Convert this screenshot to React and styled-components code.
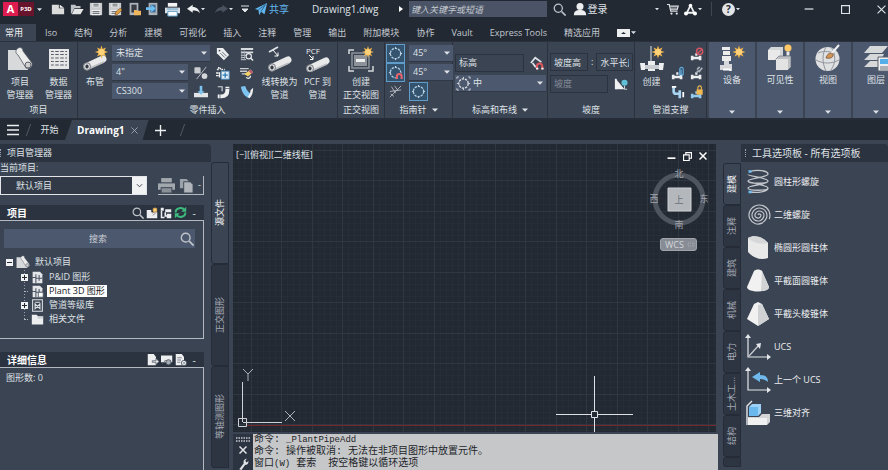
import React, { useState } from 'react';
import styled, { createGlobalStyle } from 'styled-components';

const GlobalStyle = createGlobalStyle`
  * {
    box-sizing: border-box;
  }
  body {
    margin: 0;
    background: #3b4453;
    color: #dfe2e6;
    font: 9px/12px "Open Sans", "Noto Sans CJK SC", sans-serif;
  }
  button, input, select {
    margin: 0;
    padding: 0;
    border: 0;
    border-radius: 0;
    background: transparent;
    color: inherit;
    font: inherit;
  }
  ul {
    margin: 0;
    padding: 0;
    list-style: none;
  }
  svg {
    display: block;
    flex: none;
  }
`;

/* ---------- icons ---------- */

const Icon = ({ size = 14, width, box = '0 0 16 16', children }) => (
  <svg width={width || size} height={size} viewBox={box} fill="none" stroke="none" aria-hidden="true">
    {children}
  </svg>
);

const Caret = ({ size = 6 }) => (
  <Icon size={size} box="0 0 6 6"><path d="M0 1.5h6L3 4.8z" fill="#dfe2e6" /></Icon>
);

const Spark = ({ x, y, r = 5 }) => (
  <g transform={`translate(${x} ${y}) scale(${r / 5})`}>
    <path d="M0-5.5 1-2.4 3.8-3.8 2.4-1 5.5 0 2.4 1 3.8 3.8 1 2.4 0 5.5-1 2.4-3.8 3.8-2.4 1-5.5 0-2.4-1-3.8-3.8-1-2.4z" fill="#f0b64c" />
    <circle r="2.6" fill="#ffd27a" />
  </g>
);

const NewIcon = () => (
  <Icon><path d="M1 3h8v4h6v7H1z" fill="#dcdcdc" /><path d="M10 3l5 3.5h-5z" fill="#f4f4f4" /></Icon>
);
const OpenIcon = () => (
  <Icon><path d="M1 3h5l1 1.500h5V7H5l-3 6H1z" fill="#bfc2c6" /><path d="M5 8h10.500l-3.500 6H2z" fill="#e6e6e6" /></Icon>
);
const SaveIcon = ({ pen }) => (
  <Icon>
    <path d="M1 1h14v14H1z" fill="#c9cbce" />
    <path d="M4 1h8v5H4zM3 9h10v6H3z" fill="#f1f1f1" />
    <path d="M5 2.500h6M5 4.500h6M4 11h8M4 13h8" stroke="#4a505a" />
    {pen && <path d="M8 15l1-4 5-4 2 2-4.500 5z" fill="#e0a040" stroke="#70431f" strokeWidth=".6" />}
  </Icon>
);
const DeviceIcon = ({ blue }) => (
  <Icon>
    <path d="M3 1h10v14H3z" fill="#aeb3b9" />
    <path d="M5 3h6v9H5z" fill={blue ? '#3f6f9a' : '#383d45'} />
    {blue
      ? <path d="M0 7h6V4l5 4.500L6 13v-3H0z" fill="#6fc0f2" transform="translate(0 -1)" />
      : <path d="M8 9h3l1 1h4v5H8z" fill="#efb55c" />}
  </Icon>
);
const PrinterIcon = ({ gray, size = 15 }) => (
  <Icon size={size}>
    <path d="M3 1h10v4H3z" fill={gray ? '#a2a7ae' : '#f4f4f4'} />
    <path d="M0 6h16v6H0z" fill={gray ? '#a2a7ae' : '#d9e0e6'} />
    <path d="M3 10h10v5H3z" fill={gray ? '#8b9098' : '#fff'} stroke={gray ? '#4b535f' : '#5a9bc8'} />
    {!gray && <path d="M2 7.500h12" stroke="#5a9bc8" />}
  </Icon>
);
const ArrowIcon = ({ redo }) => (
  <Icon size={13}>
    <g transform={redo ? 'matrix(-1 0 0 1 16 0)' : undefined}>
      <path d="M0 7l7-5v3c5 0 8 3 9 8-2-3-5-4-9-3.500V12z" fill={redo ? '#4a525f' : '#eceef0'} />
    </g>
  </Icon>
);
const ShareIcon = () => (
  <Icon><path d="M1 8L15 1l-3 13-4-3-2 4-1-6z" fill="#62b6ee" /><path d="M5 9l8-6-5 8" stroke="#235a86" /></Icon>
);
const SearchIcon = ({ size = 13, color = '#c0c4ca' }) => (
  <Icon size={size}><circle cx="6.500" cy="6.500" r="5" stroke={color} strokeWidth="1.600" /><path d="M10.500 10.500l5 5" stroke={color} strokeWidth="2" /></Icon>
);
const UserIcon = () => (
  <Icon><circle cx="8" cy="5" r="4" fill="#eceef0" /><path d="M1 15c0-5 3-6 7-6s7 1 7 6z" fill="#eceef0" /></Icon>
);
const CartIcon = () => (
  <Icon size={12}>
    <path d="M0 2h3l2 9h9M4 4h11l-1.500 5H5" stroke="#dfe2e6" strokeWidth="1.600" />
    <path d="M5 5h9M5 7h8" stroke="#dfe2e6" /><circle cx="6" cy="14" r="1.500" fill="#dfe2e6" /><circle cx="13" cy="14" r="1.500" fill="#dfe2e6" />
  </Icon>
);
const AppsIcon = () => (
  <Icon size={13}><path d="M8 3L3 13M8 3l5 10M4 12h8" stroke="#eceef0" strokeWidth="2.200" /><circle cx="8" cy="3" r="2.200" fill="#fff" /><circle cx="2.500" cy="13" r="2.500" fill="#fff" /><circle cx="13.500" cy="13" r="2.500" fill="#fff" /></Icon>
);

const ProjectIcon = ({ size = 26 }) => (
  <Icon size={size} box="0 0 26 26">
    <path d="M1 4h10l4 7 6 7v6H1z" fill="#d8d9da" />
    <path d="M10 3c3-3 6-1 6 2l9 12c1 4-3 7-6 5L11 9c-2-1-3-4-1-6z" fill="#ececec" stroke="#50565f" strokeWidth=".8" />
    <circle cx="21" cy="19" r="3" fill="#d0d0d0" stroke="#5c6169" />
  </Icon>
);
const DataIcon = () => (
  <Icon size={26} box="0 0 26 26">
    <path d="M3 3h20v20H3z" fill="#e6e6e6" />
    <path d="M5 8.500h16M5 12h16M5 15.500h16M5 19h16M5 5.500h16" stroke="#565d68" strokeWidth="1.200" />
    <path d="M8.500 4v18M13.500 4v18M18.500 4v18" stroke="#e6e6e6" strokeWidth="1.500" />
  </Icon>
);
const Pipe = ({ y = 0 }) => (
  <g transform={`translate(0 ${y})`}>
    <path d="M5 18.500L21 11" stroke="#e9e9e9" strokeWidth="7" strokeLinecap="round" />
    <path d="M6 21l16-7" stroke="#b9bbbd" strokeWidth="1.500" />
    <ellipse cx="5" cy="18.500" rx="3.500" ry="3.800" fill="#dcdcdc" stroke="#747980" />
    <ellipse cx="5" cy="18.500" rx="1.600" ry="1.900" fill="#333a45" />
  </g>
);
const PipeIcon = () => (
  <Icon size={26} box="0 0 26 26"><Pipe y={2} /><Spark x={19.500} y={6} r={6} /></Icon>
);
const LineToPipeIcon = () => (
  <Icon size={26} box="0 0 26 26">
    <path d="M2 6l9-5" stroke="#dfe2e6" strokeWidth="1.800" /><path d="M6 4l5 6M11 6.500V10H7.500" stroke="#fff" /><Pipe y={3} />
  </Icon>
);
const PcfIcon = () => (
  <Icon size={26} box="0 0 26 26">
    <text x="1" y="8" fontSize="8" fill="#eceef0">PCF</text><path d="M4 9l4 4M8 10v3.500H5" stroke="#fff" /><Pipe y={4} />
  </Icon>
);
const OrthoIcon = () => (
  <Icon size={26} box="0 0 26 26">
    <path d="M1 8V4h5M1 20v5h5M20 25h5v-5" stroke="#d5d8dc" strokeWidth="1.500" />
    <path d="M4 7h17v15H4z" stroke="#8b919a" strokeWidth="1.500" />
    <path d="M6 9h13v11H6z" fill="#8d9299" /><path d="M8 13h9v3H8z" fill="#eceef0" />
    <Spark x={20} y={6} r={5.500} />
  </Icon>
);
const SupportIcon = () => (
  <Icon size={26} box="0 0 26 26">
    <path d="M12 0v16" stroke="#aab0b8" strokeWidth="1.500" />
    <path d="M1 17h5v7H2zM20 17h5l-1 7h-4zM9 15h7v10H9z" fill="#eceef0" /><path d="M6 19h14v4H6z" fill="#c9ccd0" />
    <Spark x={19} y={6} r={6} />
  </Icon>
);
const EquipmentIcon = () => (
  <Icon size={28} box="0 0 28 28">
    <path d="M4 3h8v3H4zM5 7h7v4H5zM4 12h9v5H4z" fill="#ececec" />
    <path d="M6 17h5v4H6zM2 21h4v5H2zM11 20h3v7h-3zM6 21h5v4H6z" fill="#d5d7da" /><path d="M5 25.500h8" stroke="#fff" strokeWidth="2" />
    <Spark x={21} y={8} r={6} />
  </Icon>
);
const VisibilityIcon = () => (
  <Icon size={28} box="0 0 28 28">
    <path d="M2 6l3-3h12v10l-3 3H2z" fill="#d4d5d7" /><path d="M2 6h12v10H2z" fill="#e9e9e9" />
    <path d="M10 15l3-3h12v11l-3 3H10z" fill="#bdbfc2" stroke="#5c6575" strokeWidth=".6" /><path d="M10 15h12v11H10z" fill="#e3e3e3" />
    <circle cx="22" cy="4" r="3.500" fill="#ffc766" /><path d="M20.500 7.500h3v4h-3z" fill="#e6e6e6" />
  </Icon>
);
const ViewIcon = () => (
  <Icon size={28} box="0 0 28 28">
    <circle cx="13.500" cy="15" r="12" fill="#dfe0e1" />
    <path d="M2 16c7 4 16 4 23 0M12 3c-4 7-4 16 0 24M17 3c5 7 5 16 0 23M4 9c5-2 10-2 16 0" stroke="#8f949c" />
    <path d="M25 1l-8 9" stroke="#f0f0f0" strokeWidth="2" /><path d="M12 14c1-4 4-6 7-4 1 3-2 5-7 4z" fill="#d09358" stroke="#6d4a2b" strokeWidth=".7" />
  </Icon>
);
const LayerIcon = () => (
  <Icon size={28} box="0 0 28 28">
    <path d="M8 2h18l-6 7H2zM8 10h14l-3 6H2zM8 17h10v6H2z" fill="#d5d7d9" />
    <path d="M16 13h12v14H16z" fill="#eceef0" stroke="#59606c" /><path d="M18 15h8v5h-8z" fill="#55aee8" /><path d="M18 23h8M18 25h8" stroke="#6c727b" />
  </Icon>
);

const TagIcon = () => (
  <Icon><path d="M1 1h7l7 8-6 6-8-8z" fill="#eceef0" /><path d="M5 7l5 5M7 5.500l5 5" stroke="#596270" /><circle cx="4" cy="4" r="1" fill="#3b4453" /></Icon>
);
const ListIcon = () => (
  <Icon><path d="M1 1h14v2.500H1zM1 5h14v2H1z" fill="#d7dade" /><path d="M1 9.500h6M1 12h5M1 14.500h6" stroke="#d7dade" /><path d="M2 4v10M5 4v10" stroke="#a4aab2" /><circle cx="10" cy="10.500" r="3" stroke="#eceef0" strokeWidth="1.300" /><path d="M12 12.500l3 3" stroke="#eceef0" strokeWidth="1.500" /></Icon>
);
const PercentIcon = () => (
  <Icon><path d="M1 2h6v6H1zM14 1L3 15" fill="#c9ccd0" stroke="#c9ccd0" /><circle cx="12" cy="11.500" r="3.300" fill="#d5d7da" /></Icon>
);
const InsertIcon = () => (
  <Icon><path d="M1 4h2v-2h2v2h5" stroke="#eceef0" strokeWidth="1.500" strokeDasharray="2 1" /><path d="M0 8h3M0 11h3M4 7v6" stroke="#eceef0" strokeWidth="1.500" /><path d="M6 6h9v9H6z" fill="#e5edf4" stroke="#559bd0" /><path d="M10.500 7.500v6M7.500 10.500h6" stroke="#2c7cb8" strokeWidth="1.500" /></Icon>
);
const EditIcon = () => (
  <Icon><path d="M0 3h10M0 6h8M2 9h5" stroke="#c9ccd0" strokeWidth="1.500" /><path d="M5 9l7-5 3 3-6 5z" fill="#f1d066" /><path d="M12 4l3 3-2 2-3-3z" fill="#b65a7b" /><path d="M7 13c2 2 5 1 5-2" stroke="#eceef0" strokeWidth="1.500" /></Icon>
);
const TeeIcon = () => (
  <Icon><path d="M0 9h16v5H0z" fill="#e2e5e8" /><path d="M8 1v7" stroke="#7cc3f0" strokeWidth="3" /><path d="M4 7h8l-4 4z" fill="#7cc3f0" /></Icon>
);
const ElbowIcon = () => (
  <Icon><path d="M13 2v4c0 4-2 7-7 7H2" stroke="#f1f1f1" strokeWidth="4.500" /><path d="M2 2h5v5" stroke="#d7dade" strokeWidth="1.300" /><path d="M10 4h6M4.500 10v6" stroke="#606774" /></Icon>
);
const BendIcon = () => (
  <Icon><path d="M1 2c1 6 4 11 9 13l3-5C9 8 7 5 6 1z" fill="#7cc3f0" /><path d="M11 15c3-3 4-7 4-12l-3 3c0 3-1 5-3 7z" fill="#eceef0" /></Icon>
);
const CompassIcon = ({ magnet, corners }) => (
  <Icon size={15}>
    <circle cx="8" cy="8" r={corners ? 5 : 5.500} stroke={corners ? '#dfe2e6' : '#b4d0e4'} strokeWidth="1.400" strokeDasharray="2.500 1" />
    <path d="M8 1v2M8 13v2M1 8h2M13 8h2" stroke="#cfd4da" />
    {corners && <path d="M1 3V1h2M13 1h2v2M1 13v2h2M13 15h2v-2" stroke="#cfd4da" />}
    {magnet && <><path d="M8 8h8v8H8z" fill="#33536f" /><path d="M9.500 15v-3a2.500 2.500 0 015 0v3" stroke="#e9646b" strokeWidth="2.200" /></>}
  </Icon>
);
const RoutingIcon = () => (
  <Icon size={13}><path d="M1 15L15 1M1 8l14-2M3 2l5 8M7 1l4 6M2 11l4 3" stroke="#b9bec5" strokeWidth="1.100" /></Icon>
);
const MagnetIcon = () => (
  <Icon><path d="M1 8l5-6 7 5M3 8l3 4h3" stroke="#dfe2e6" strokeWidth="2" /><path d="M8 15v-3.500a3 3 0 016 0V15" stroke="#dc565d" strokeWidth="2.400" /><path d="M7 14.500h2.500M13 14.500h2.500" stroke="#fff" strokeWidth="2" /></Icon>
);
const SlopeIcon = () => (
  <Icon><path d="M2 2l10 12H2z" fill="#f0f0f0" /><path d="M2 2v12" stroke="#f0f0f0" strokeWidth="2" /><circle cx="12" cy="6.500" r="3.500" fill="#5fc0d6" /><path d="M12 10v4h3" stroke="#dfe2e6" /></Icon>
);
const ClampIcon = ({ kind }) => (
  <Icon>
    <path d="M1 10h3v5H1zM10 10h3v5h-3zM4 11h6v3H4zM6 7h2.500v3H6z" fill={kind === 'lock' ? '#93c9ec' : '#eceef0'} />
    {kind === 'off' && <g stroke="#d05664" strokeWidth="1.700"><circle cx="11" cy="5" r="3.500" /><path d="M8.500 7.500l5-5" /></g>}
    {kind === 'clip' && <path d="M10 11V3.500a2 2 0 014 0V9a1.200 1.200 0 01-2.400 0V4" stroke="#5faee2" strokeWidth="1.300" />}
    {kind === 'link' && <path d="M7 8l3-3M10 7l4-5M8 4l3-3" stroke="#a9afb8" strokeWidth="2" />}
    {kind === 'lock' && <><path d="M7.500 5h7v6h-7z" fill="#f2b950" /><path d="M9 5V3a2 2 0 014 0v2" stroke="#f2b950" strokeWidth="1.300" /></>}
  </Icon>
);
const BranchIcon = () => (
  <Icon><path d="M3 2v5c0 2 1 3 3 3h4M10 6v9" stroke="#a8d6f2" strokeWidth="3" /><path d="M1 2h5M14 8v6" stroke="#fff" strokeWidth="2" /></Icon>
);

const FolderStarIcon = () => (
  <Icon size={12}><path d="M1 4h6v3h8v8H1z" fill="#eceef0" /><path d="M8 8l4-2M9 11l4-3" stroke="#7b6d62" /><Spark x={12} y={4} r={4} /></Icon>
);
const TreeViewIcon = () => (
  <Icon size={12}><path d="M1 1h4v4H1zM7 3h8v4H7zM9 9h6v6H9z" fill="#eceef0" /><path d="M2 5v9h4M7 7v5h3" stroke="#eceef0" strokeWidth="2" /></Icon>
);
const RefreshIcon = () => (
  <Icon size={13}><path d="M2 8c0-6 8-7 11-3M14 8c0 6-8 7-11 3" stroke="#3dbb7d" strokeWidth="2.500" /><path d="M15 1v6H9zM1 15V9h6z" fill="#3dbb7d" /></Icon>
);
const CopyIcon = () => (
  <Icon size={15}><path d="M1 1h7l2 2v8H1z" fill="#9ca2aa" /><path d="M5 4h7l3 3v9H5z" fill="#b1b5bb" stroke="#3b4453" /></Icon>
);
const SheetIcon = ({ kind }) => (
  <Icon size={12}>
    <path d={kind === 'preview' ? 'M0 2h15v9H0z' : 'M1 0h8l3 4v11H1z'} fill="#eceef0" />
    {kind === 'export' && <path d="M7 9h5V6l4 4-4 4v-3H7z" fill="#eceef0" stroke="#4d5562" />}
    {kind === 'preview' && <><path d="M2 13l4-5 3 3" stroke="#59606c" /><circle cx="10" cy="11" r="3.500" fill="#a5abb3" stroke="#3b4453" /></>}
    {kind === 'settings' && <><path d="M3 5h6M3 8h5M3 11h4" stroke="#59606c" /><circle cx="12" cy="12" r="3.500" fill="#eceef0" stroke="#3b4453" /><circle cx="12" cy="12" r="1" fill="#3b4453" /></>}
  </Icon>
);
const DrawingIcon = ({ kind }) => (
  <Icon size={13}>
    {kind === 'book'
      ? <path d="M2 1h12v14H2zM5 12V6l6 6V6zM5 4h6" stroke="#dfe2e6" strokeWidth="1.300" />
      : <><path d="M2 1h9l3 3v11H2z" fill="#e3e5e8" /><path d="M1 8h5V4M6 15V9h8M10 5v7" stroke="#4c5563" strokeWidth="1.300" /></>}
    {kind === 'plant' && <path d="M9 9h6v6H9z" fill="#fff" stroke="#4c5563" />}
  </Icon>
);
const FolderIcon = () => (
  <Icon size={13}><path d="M1 2h6l1.500 2H15v10H1z" fill="#eceef0" /><path d="M8 6h7" stroke="#aeb3ba" /></Icon>
);

const ToolIcon = ({ kind }) => (
  <Icon size={26} box="0 0 26 26">
    {kind === 'helix' && <>
      <path d="M5 2.500c7-2 18-1 18 2.500S3 9 3 12s20 3 20 0S3 7 3 5.500M23 12c0 4-20 4-20 7s20 3 20 0S3 14 3 12M23 19c0 4-11 5-18 4" stroke="#c3c7cc" strokeWidth="1.300" />
      <path d="M3.500 2.500h3M3.500 23h3" stroke="#6fbef0" strokeWidth="2.500" />
    </>}
    {kind === 'spiral' && <path d="M13 13a1.500 1.500 0 013 0a3 3 0 01-6 0a4.500 4.500 0 019 0a6 6 0 01-12 0a7.500 7.500 0 0115 0a9 9 0 01-18 0a10.500 10.500 0 0121 0" transform="rotate(20 13 13)" stroke="#c3c7cc" strokeWidth="1.200" />}
    {kind === 'cylinder' && <><path d="M3 3c7-4 16 0 20 5v15C15 26 7 22 3 17z" fill="#e9e9e9" /><path d="M3 3c7-4 16 0 20 5-8 2-16-1-20-5z" fill="#d6d7d9" /></>}
    {kind === 'cone' && <><path d="M9 3c2-2 6-2 8 0l7 16c0 6-22 6-22 0z" fill="#f1f1f1" /><path d="M17 3l7 16c0 3-5 4-8 4z" fill="#d1d2d4" /></>}
    {kind === 'pyramid' && <><path d="M9 3l4-2 4 2 7 15-11 7-11-7z" fill="#f1f1f1" /><path d="M13 4l4-1 7 15-11 7z" fill="#cfd1d3" /></>}
    {(kind === 'ucs' || kind === 'ucsPrev') && <><path d="M3 2v21h20" stroke="#e5e7ea" strokeWidth="1.200" /><path d="M0 4l3-4 3 4zM22 20l4 3-4 3z" fill="#e5e7ea" /></>}
    {kind === 'ucs' && <><path d="M4 22L14 11" stroke="#c9ccd0" strokeWidth="1.300" /><path d="M11 10l5-1-1 6z" fill="#e5e7ea" /></>}
    {kind === 'ucsPrev' && <path d="M7 10l8-5v3c5 0 8 2 8 7-2-2-5-3-8-3v3z" fill="#6fb9ec" />}
    {kind === 'align' && <>
      <path d="M2 25V6l5-5" stroke="#e5e7ea" strokeWidth="1.400" />
      <path d="M3 17h11l3-3h8v8l-3 3H3z" fill="#d2d4d6" /><path d="M3 18h19v7H3z" fill="#f0f0f0" />
      <path d="M4 7l3-3h9v9l-3 3H4z" fill="#9dd2f6" /><path d="M4 7h9v9H4z" fill="#6ab9ee" />
    </>}
  </Icon>
);

/* ---------- title bar ---------- */

const Shell = styled.div`
  display: flex;
  flex-direction: column;
  height: 100vh;
  overflow: hidden;
`;

const TitleBar = styled.header`
  display: flex;
  flex: none;
  align-items: center;
  height: 24px;
  padding: 0 0 6px 3px;
  background: #222933;
`;

const AppMenu = styled.button`
  display: flex;
  align-items: center;
  gap: 3px;
  width: 40px;
  margin-right: 8px;
`;

const Logo = styled.span`
  display: flex;
  height: 14px;
  color: #fff;
  font-weight: 700;
  line-height: 14px;
`;

const LogoLetter = styled.span`
  width: 15px;
  background: #df1c50;
  font-size: 11px;
  text-align: center;
`;

const LogoProduct = styled.span`
  width: 16px;
  background: #68142c;
  font-size: 6px;
  text-align: center;
`;

const QuickTools = styled.div`
  display: flex;
  gap: 5px;
`;

const BarButton = styled.button`
  display: flex;
  align-items: center;
  justify-content: center;
  gap: 1px;
  min-width: ${(props) => props.$width || 14}px;
  height: 16px;
  margin-left: ${(props) => props.$lead || 0}px;
  white-space: nowrap;
  color: ${(props) => (props.$share ? '#62b6ee' : '#dfe2e6')};
  font-size: 10px;
`;

const FileName = styled.h1`
  width: 87px;
  margin: 0 0 0 23px;
  font-size: 10px;
  font-weight: 400;
`;

const KeywordSearch = styled.input`
  width: 138px;
  height: 16px;
  margin: 0 5px 0 6px;
  padding: 0 2px;
  background: #4a5466;
  font-style: italic;
  &::placeholder {
    color: #c5cad1;
  }
`;

const Divider = styled.span`
  width: 1px;
  height: 14px;
  margin: 0 5px;
  background: #3e4652;
`;

const Help = styled.span`
  width: 13px;
  border-radius: 7px;
  background: #e2e4e7;
  color: #222933;
  font-weight: 700;
  line-height: 13px;
`;

const WindowButtons = styled.div`
  display: flex;
  gap: 22px;
  margin-left: auto;
`;

/* ---------- ribbon ---------- */

const TabRow = styled.nav`
  display: flex;
  flex: none;
  align-items: center;
  gap: 17px;
  height: 17px;
  background: #222933;
`;

const TabButton = styled.button`
  height: 17px;
  padding: ${(props) => (props.$active ? '0 13px 0 5px' : '0')};
  margin-right: ${(props) => (props.$active ? '-8px' : '0')};
  background: ${(props) => (props.$active ? '#3b4453' : 'transparent')};
  color: ${(props) => (props.$active ? '#f2f3f5' : '#c3c8cf')};
  white-space: nowrap;
`;

const RibbonBar = styled.section`
  display: flex;
  flex: none;
  height: 79px;
  border-top: 1px solid #2b323e;
  border-bottom: 2px solid #262d38;
  overflow: hidden;
`;

const PanelBox = styled.div`
  display: flex;
  flex: none;
  flex-direction: column;
  width: ${(props) => props.$width}px;
  padding: 2px 0 1px;
  border-right: 1px solid #2b323e;
`;

const PanelBody = styled.div`
  display: flex;
  flex: 1;
  justify-content: ${(props) => (props.$center ? 'center' : 'flex-start')};
  padding-left: ${(props) => props.$inset || 0}px;
`;

const PanelTitle = styled.div`
  display: flex;
  align-items: center;
  justify-content: center;
  gap: 5px;
  height: 14px;
`;

const BigButton = styled.button`
  display: flex;
  flex: none;
  flex-direction: column;
  align-items: center;
  gap: 3px;
  width: ${(props) => props.$width}px;
  padding-top: 2px;
  line-height: 13px;
  white-space: pre;
`;

const PartGrid = styled.div`
  display: grid;
  grid-template-columns: 79px 22px 24px 24px;
  grid-auto-rows: 19px;
  align-items: center;
`;

const PartCell = styled.div`
  grid-column: span ${(props) => props.$span || 1};
  padding-right: 3px;
`;

const SmallButton = styled.button`
  display: flex;
  align-items: center;
  justify-content: center;
  width: 19px;
  height: 19px;
  border: 1px solid ${(props) => (props.$on ? '#5f9cc9' : 'transparent')};
  background: ${(props) => (props.$on ? '#33536f' : 'transparent')};
`;

const SelectBox = styled.div`
  display: grid;
  align-items: center;
  height: 17px;
  background: #4c586e;
  border-bottom: 1px solid #303846;
  & > * {
    grid-area: 1 / 1;
  }
  & > svg {
    justify-self: end;
    margin-right: 3px;
    pointer-events: none;
  }
`;

const SelectInput = styled.select`
  width: 100%;
  padding: 0 4px;
  padding-left: ${(props) => props.$indent || 4}px;
  appearance: none;
`;

const LeadIcon = styled.span`
  padding-left: 1px;
  pointer-events: none;
`;

const CompassGrid = styled.div`
  display: grid;
  grid-template-columns: 19px 44px;
  grid-auto-rows: 19px;
  column-gap: 4px;
  align-items: center;
`;

const Stack = styled.div`
  display: flex;
  flex: 1;
  flex-direction: column;
  gap: 3px;
  padding: 9px 3px 0 2px;
`;

const Line = styled.div`
  display: flex;
  align-items: center;
  gap: 3px;
`;

const TextBox = styled.input`
  width: ${(props) => props.$width}px;
  height: 18px;
  padding: 0 3px;
  border: 1px solid #2c3340;
  background: #3b4453;
  color: #dfe2e6;
  &::placeholder {
    color: #dfe2e6;
  }
  &:disabled::placeholder {
    color: #858c98;
  }
`;

const SupportGrid = styled.div`
  display: grid;
  grid-template-columns: 19px 19px;
  grid-auto-rows: 19px;
`;

const EmptyCell = styled.span``;

const TileButton = styled.button`
  display: flex;
  flex: none;
  flex-direction: column;
  align-items: center;
  gap: 2px;
  width: 46px;
  margin-left: 2px;
  padding: 2px 0 3px;
  background: #4c586e;
  & > svg:last-child {
    margin-top: auto;
  }
`;

/* ---------- document tabs ---------- */

const DocRow = styled.nav`
  display: flex;
  flex: none;
  align-items: center;
  height: 20px;
  padding-left: 7px;
  background: #222933;
`;

const DocButton = styled.button`
  display: flex;
  align-items: center;
  justify-content: center;
  width: ${(props) => props.$width}px;
  height: 20px;
`;

const ActiveDoc = styled.div`
  display: flex;
  align-items: center;
  gap: 3px;
  height: 20px;
  margin-left: 4px;
  padding: 0 7px 0 12px;
  background: #3b4453;
  color: #fff;
  font-size: 10px;
  font-weight: 700;
  clip-path: polygon(7px 0, 100% 0, calc(100% - 6px) 100%, 0 100%);
`;

const Slash = styled.span`
  width: 1px;
  height: 12px;
  margin: 0 9px;
  background: #515965;
  transform: skewX(-20deg);
`;

/* ---------- palettes ---------- */

const Workspace = styled.main`
  display: flex;
  flex: 1;
  min-height: 0;
  padding-top: 4px;
`;

const LeftDock = styled.aside`
  display: grid;
  flex: none;
  grid-template-columns: 204px 26px;
  grid-template-rows: 18px 1fr;
  min-height: 0;
`;

const PaletteTitle = styled.h2`
  display: flex;
  grid-column: ${(props) => (props.$wide ? '1 / 3' : 'auto')};
  align-items: center;
  gap: 5px;
  height: 18px;
  margin: 0 ${(props) => (props.$wide ? 19 : 0)}px 0 0;
  padding-left: ${(props) => (props.$wide ? 0 : 4)}px;
  border-radius: 0 4px 0 0;
  background: #2c3340;
  font-size: ${(props) => (props.$wide ? 9 : 10)}px;
  font-weight: 400;
`;

const Grip = styled.span`
  width: 2px;
  height: 8px;
  border-left: 1px dotted #9aa1ac;
`;

const ManagerBody = styled.div`
  display: flex;
  flex-direction: column;
  min-height: 0;
`;

const ProjectRow = styled.div`
  display: flex;
  height: 19px;
  margin: 2px 0 10px;
`;

const ProjectSelect = styled.div`
  display: grid;
  width: 147px;
  align-items: center;
  border: 1px solid #e3e5e8;
  background: #323a48;
  & > * {
    grid-area: 1 / 1;
  }
`;

const DropMark = styled.span`
  display: flex;
  justify-self: end;
  align-items: center;
  justify-content: center;
  width: 14px;
  height: 17px;
  background: #f1f2f3;
  pointer-events: none;
`;

const ProjectActions = styled.div`
  display: flex;
  align-items: center;
  gap: 4px;
  margin-left: 11px;
  width: 46px;
  border-right: 1px solid #b4b9c1;
  border-bottom: 1px solid #b4b9c1;
`;

const SectionBar = styled.div`
  display: flex;
  align-items: center;
  gap: 2px;
  height: 15px;
  padding: 0 5px 0 7px;
  background: #2c3340;
`;

const SectionName = styled.h3`
  flex: 1;
  margin: 0;
  color: #fff;
  font-size: 10px;
`;

const SectionBox = styled.div`
  flex: ${(props) => (props.$fill ? 1 : 'none')};
  margin-bottom: ${(props) => (props.$fill ? 0 : 13)}px;
  padding: ${(props) => (props.$fill ? '4px 6px' : '8px 8px 12px 4px')};
  border: 1px solid #b4b9c1;
  border-left: 0;
  border-bottom-width: ${(props) => (props.$fill ? 0 : 1)}px;
`;

const TreeSearch = styled.div`
  display: flex;
  align-items: center;
  height: 19px;
  padding-right: 1px;
  margin-bottom: 7px;
  background: #4c586e;
`;

const TreeSearchInput = styled.input`
  flex: 1;
  min-width: 0;
  padding-left: 12px;
  text-align: center;
  &::placeholder {
    color: #c9cdd4;
  }
`;

const TreeBranch = styled.ul`
  background: repeating-linear-gradient(#9aa1ac 0 1px, transparent 1px 3px) 20px 0 / 1px 50px no-repeat;
`;

const TreeRow = styled.li`
  display: flex;
  align-items: center;
  gap: 3px;
  height: 14px;
  margin-bottom: ${(props) => (props.$level ? 0 : 1)}px;
  padding-left: ${(props) => (props.$level ? 17 : 2)}px;
`;

const Expander = styled.button`
  display: flex;
  align-items: center;
  justify-content: center;
  width: 7px;
  height: 7px;
  background: #f1f2f3;
`;

const Branch = styled.span`
  width: 4px;
  margin-left: 3px;
  border-top: 1px dotted #b4b9c1;
`;

const TreeLabel = styled.span`
  padding: 0 2px;
  background: ${(props) => (props.$selected ? '#fff' : 'transparent')};
  color: ${(props) => (props.$selected ? '#15181d' : '#dfe2e6')};
`;

const SideTabs = styled.div`
  display: flex;
  flex-direction: column;
  width: ${(props) => props.$width}px;
  margin-left: ${(props) => props.$inset || 0}px;
`;

const SideTab = styled.button`
  display: flex;
  align-items: center;
  justify-content: center;
  height: ${(props) => props.$height}px;
  border: 1px solid #252c37;
  border-radius: 3px 0 0 3px;
  background: ${(props) => (props.$active ? '#3b4453' : '#2e3542')};
  color: ${(props) => (props.$active ? '#f2f3f5' : '#a5abb5')};
`;

const SideText = styled.span`
  writing-mode: vertical-rl;
  text-orientation: sideways;
  transform: rotate(180deg);
  white-space: nowrap;
`;

const RightDock = styled.aside`
  display: grid;
  flex: none;
  grid-template-columns: 18px 147px;
  grid-template-rows: 19px 1fr;
`;

const ToolList = styled.ul`
  padding: 2px 0 0 4px;
`;

const ToolButton = styled.button`
  display: flex;
  align-items: center;
  gap: 3px;
  height: 33px;
  color: #eceef0;
  white-space: nowrap;
`;

/* ---------- drawing area ---------- */

const Center = styled.section`
  display: flex;
  flex: 1;
  flex-direction: column;
  gap: 2px;
  min-width: 0;
  margin: 0 5px 0 3px;
`;

const Canvas = styled.div`
  position: relative;
  flex: 1;
  margin-right: 2px;
  overflow: hidden;
  background: #222932;
`;

const Overlay = styled.div`
  position: absolute;
  top: ${(props) => props.$top};
  right: ${(props) => props.$right};
  bottom: ${(props) => props.$bottom};
  left: ${(props) => props.$left};
  display: flex;
  gap: ${(props) => props.$gap || 0}px;
`;

const WcsButton = styled.button`
  display: flex;
  align-items: center;
  gap: 3px;
  width: 37px;
  height: 13px;
  padding-left: 4px;
  border: 1px solid #a0a5ad;
  border-radius: 3px;
  background: #878c95;
  color: #d4d7dc;
`;

const CommandPanel = styled.div`
  display: flex;
  flex: none;
`;

const CommandTools = styled.div`
  display: flex;
  flex: none;
  flex-direction: column;
  align-items: center;
  gap: 4px;
  width: 20px;
  height: 36px;
  padding-top: 3px;
  background: #2c3442;
  overflow: hidden;
`;

const CommandLog = styled.div`
  flex: 1;
  min-width: 0;
  padding: 0 1px;
  background: #c6c7c8;
  color: #22252a;
  font: 10px/12px "Liberation Mono", "Noto Sans CJK SC", monospace;
  white-space: pre;
`;

const CommandLine = styled.div`
  height: 12px;
`;

const CommandText = styled.span`
  font-size: 9px;
`;

const tabs = ['常用', 'Iso', '结构', '分析', '建模', '可视化', '插入', '注释', '管理', '输出', '附加模块', '协作', 'Vault', 'Express Tools', '精选应用'];

const tiles = [
  { name: '设备', icon: <EquipmentIcon /> },
  { name: '可见性', icon: <VisibilityIcon /> },
  { name: '视图', icon: <ViewIcon /> },
  { name: '图层', icon: <LayerIcon /> },
];

const treeItems = [
  { name: 'P&ID 图形', icon: <DrawingIcon />, open: true },
  { name: 'Plant 3D 图形', icon: <DrawingIcon kind="plant" /> },
  { name: '管道等级库', icon: <DrawingIcon kind="book" />, open: true },
  { name: '相关文件', icon: <FolderIcon /> },
];

const paletteTabs = ['建模', '注释', '建筑', '机械', '电力', '土木工...', '结构'];

const tools = [
  ['helix', '圆柱形螺旋'],
  ['spiral', '二维螺旋'],
  ['cylinder', '椭圆形圆柱体'],
  ['cone', '平截面圆锥体'],
  ['pyramid', '平截头棱锥体'],
  ['ucs', 'UCS'],
  ['ucsPrev', '上一个 UCS'],
  ['align', '三维对齐'],
];

const Select = ({ label, value, lead }) => (
  <SelectBox>
    <SelectInput aria-label={label} defaultValue={value} $indent={lead ? 18 : 4}>
      <option>{value}</option>
    </SelectInput>
    {lead && <LeadIcon>{lead}</LeadIcon>}
    <Caret />
  </SelectBox>
);

const Panel = ({ title, width, inset, center, menu, children }) => (
  <PanelBox $width={width}>
    <PanelBody $inset={inset} $center={center}>{children}</PanelBody>
    <PanelTitle>{title}{menu && <Caret />}</PanelTitle>
  </PanelBox>
);

const Tool = ({ label, on, children }) => (
  <SmallButton aria-label={label} $on={on}>{children}</SmallButton>
);

const Header = () => (
  <TitleBar>
    <AppMenu aria-label="应用程序菜单">
      <Logo><LogoLetter>A</LogoLetter><LogoProduct>P3D</LogoProduct></Logo>
      <Caret size={5} />
    </AppMenu>
    <QuickTools>
      <BarButton aria-label="新建"><NewIcon /></BarButton>
      <BarButton aria-label="打开"><OpenIcon /></BarButton>
      <BarButton aria-label="保存"><SaveIcon /></BarButton>
      <BarButton aria-label="另存为"><SaveIcon pen /></BarButton>
      <BarButton aria-label="从移动设备打开"><DeviceIcon /></BarButton>
      <BarButton aria-label="保存到移动设备"><DeviceIcon blue /></BarButton>
      <BarButton aria-label="打印"><PrinterIcon /></BarButton>
      <BarButton aria-label="放弃" $width={22}><ArrowIcon /><Caret size={4} /></BarButton>
      <BarButton aria-label="重做" $width={24}><ArrowIcon redo /><Caret size={4} /></BarButton>
      <BarButton aria-label="自定义快速访问" $width={8}>
        <Icon size={8} box="0 0 8 8"><path d="M0 1h8M1 4h6L4 7z" stroke="#dfe2e6" fill="#dfe2e6" /></Icon>
      </BarButton>
      <BarButton $share><ShareIcon />共享</BarButton>
    </QuickTools>
    <FileName>Drawing1.dwg</FileName>
    <Icon size={6} width={4} box="0 0 4 6"><path d="M0 0v6l4-3z" fill="#fff" /></Icon>
    <KeywordSearch aria-label="搜索" placeholder="键入关键字或短语" />
    <BarButton aria-label="查找"><SearchIcon /></BarButton>
    <BarButton $width={48}><UserIcon />登录</BarButton>
    <BarButton aria-label="登录选项" $lead={34} $width={18}><Caret size={4} /></BarButton>
    <BarButton aria-label="应用商店"><CartIcon /></BarButton>
    <BarButton aria-label="保持连接" $width={26}><AppsIcon /><Caret size={4} /></BarButton>
    <Divider />
    <BarButton aria-label="帮助" $width={28}><Help>?</Help><Caret size={4} /></BarButton>
    <WindowButtons>
      <BarButton aria-label="最小化"><Icon size={10}><path d="M1 8h14" stroke="#dfe2e6" strokeWidth="2" /></Icon></BarButton>
      <BarButton aria-label="最大化"><Icon size={9}><path d="M1 1h14v14H1z" stroke="#dfe2e6" strokeWidth="2" /></Icon></BarButton>
      <BarButton aria-label="关闭"><Icon size={9}><path d="M1 1l14 14M15 1L1 15" stroke="#dfe2e6" strokeWidth="2" /></Icon></BarButton>
    </WindowButtons>
  </TitleBar>
);

const Ribbon = () => (
  <RibbonBar>
    <Panel title="项目" width={78}>
      <BigButton $width={40}><ProjectIcon />{'项目\n管理器'}</BigButton>
      <BigButton $width={37}><DataIcon />{'数据\n管理器'}</BigButton>
    </Panel>
    <Panel title="零件插入" width={260}>
      <BigButton $width={34}><PipeIcon />布管</BigButton>
      <PartGrid>
        <PartCell $span={2}><Select label="管线号" value="未指定" /></PartCell>
        <Tool label="标记"><TagIcon /></Tool>
        <Tool label="等级库查看器"><ListIcon /></Tool>
        <PartCell><Select label="尺寸" value={'4"'} /></PartCell>
        <Tool label="切换"><PercentIcon /></Tool>
        <Tool label="插入元件"><InsertIcon /></Tool>
        <Tool label="编辑"><EditIcon /></Tool>
        <PartCell><Select label="等级库" value="CS300" /></PartCell>
        <Tool label="支管"><TeeIcon /></Tool>
        <Tool label="弯头"><ElbowIcon /></Tool>
        <Tool label="弯管"><BendIcon /></Tool>
      </PartGrid>
      <BigButton $width={37}><LineToPipeIcon />{'线转换为\n管道'}</BigButton>
      <BigButton $width={39}><PcfIcon />{'PCF 到\n管道'}</BigButton>
    </Panel>
    <Panel title="正交视图" width={47} center>
      <BigButton $width={44}><OrthoIcon />{'创建\n正交视图'}</BigButton>
    </Panel>
    <Panel title="指南针" width={68} inset={1} menu>
      <CompassGrid>
        <Tool label="切换指南针" on><CompassIcon /></Tool>
        <Select label="捕捉角度" value="45°" />
        <Tool label="切换捕捉" on><CompassIcon magnet /></Tool>
        <Select label="公差角度" value="45°" />
        <Tool label="公差"><RoutingIcon /></Tool>
        <Tool label="旋转" on><CompassIcon /></Tool>
      </CompassGrid>
    </Panel>
    <Panel title="标高和布线" width={95} menu>
      <Stack>
        <Line><TextBox aria-label="标高" placeholder="标高" $width={69} /><Tool label="标高捕捉"><MagnetIcon /></Tool></Line>
        <Select label="布线对齐" value="中" lead={<CompassIcon corners />} />
      </Stack>
    </Panel>
    <Panel title="坡度" width={87}>
      <Stack>
        <Line>
          <TextBox aria-label="坡度高" placeholder="坡度高" $width={38} />:
          <TextBox aria-label="水平长度" placeholder="水平长度" $width={37} />
        </Line>
        <Line><TextBox aria-label="坡度" placeholder="坡度" disabled $width={58} /><Tool label="坡度切换"><SlopeIcon /></Tool></Line>
      </Stack>
    </Panel>
    <Panel title="管道支撑" width={72}>
      <BigButton $width={33}><SupportIcon />创建</BigButton>
      <SupportGrid>
        <EmptyCell />
        <Tool label="分离支撑"><ClampIcon kind="off" /></Tool>
        <Tool label="附着支撑"><ClampIcon kind="clip" /></Tool>
        <Tool label="链接支撑"><ClampIcon kind="link" /></Tool>
        <Tool label="转换支撑"><BranchIcon /></Tool>
        <Tool label="锁定支撑"><ClampIcon kind="lock" /></Tool>
      </SupportGrid>
    </Panel>
    {tiles.map((tile) => (
      <TileButton key={tile.name}>{tile.icon}{tile.name}<Caret /></TileButton>
    ))}
  </RibbonBar>
);

const ProjectManager = () => (
  <LeftDock>
    <PaletteTitle $wide><Grip />项目管理器</PaletteTitle>
    <ManagerBody>
      <label htmlFor="project">当前项目:</label>
      <ProjectRow>
        <ProjectSelect>
          <SelectInput id="project" defaultValue="默认项目" $indent={15}>
            <option>默认项目</option>
          </SelectInput>
          <DropMark><Icon size={7}><path d="M2 5l6 6 6-6" stroke="#2c3340" strokeWidth="2" /></Icon></DropMark>
        </ProjectSelect>
        <ProjectActions><PrinterIcon gray size={17} /><CopyIcon />-</ProjectActions>
      </ProjectRow>
      <SectionBar>
        <SectionName>项目</SectionName>
        <SearchIcon size={12} /><FolderStarIcon /><TreeViewIcon /><RefreshIcon /><BarButton aria-label="更多" $width={10}>-</BarButton>
      </SectionBar>
      <SectionBox>
        <TreeSearch>
          <TreeSearchInput aria-label="搜索项目" placeholder="搜索" />
          <SearchIcon size={14} />
        </TreeSearch>
        <ul>
          <TreeRow>
            <Expander aria-label="折叠"><Icon size={7} box="0 0 7 7"><path d="M1 3.500h5" stroke="#222933" /></Icon></Expander>
            <ProjectIcon size={14} />
            <TreeLabel>默认项目</TreeLabel>
          </TreeRow>
          <li>
            <TreeBranch>
              {treeItems.map((item) => (
                <TreeRow key={item.name} $level>
                  {item.open
                    ? <Expander aria-label="展开"><Icon size={7} box="0 0 7 7"><path d="M1 3.500h5M3.500 1v5" stroke="#222933" /></Icon></Expander>
                    : <Branch />}
                  {item.icon}
                  <TreeLabel $selected={item.name === 'Plant 3D 图形'}>{item.name}</TreeLabel>
                </TreeRow>
              ))}
            </TreeBranch>
          </li>
        </ul>
      </SectionBox>
      <SectionBar>
        <SectionName>详细信息</SectionName>
        <SheetIcon kind="export" /><SheetIcon kind="preview" /><SheetIcon kind="settings" /><BarButton aria-label="更多" $width={10}>-</BarButton>
      </SectionBar>
      <SectionBox $fill>图形数: 0</SectionBox>
    </ManagerBody>
    <SideTabs $width={18} $inset={7}>
      <SideTab $height={102} $active><SideText>源文件</SideText></SideTab>
      <SideTab $height={102}><SideText>正交图形</SideText></SideTab>
      <SideTab $height={102}><SideText>等轴测图形</SideText></SideTab>
    </SideTabs>
  </LeftDock>
);

const GridLines = () => (
  <svg width="100%" height="100%" aria-hidden="true">
    <defs>
      <pattern id="grid" x="18" y="6" width="61" height="61" patternUnits="userSpaceOnUse">
        <path d="M6.500 0v61M12.500 0v61M18.500 0v61M24.500 0v61M36.500 0v61M42.500 0v61M48.500 0v61M54.500 0v61M0 6.500h61M0 12.500h61M0 18.500h61M0 24.500h61M0 36.500h61M0 42.500h61M0 48.500h61M0 54.500h61" stroke="#262d36" />
        <path d="M.5 0v61M30.500 0v61M0 .5h61M0 30.500h61" stroke="#2f3741" />
      </pattern>
    </defs>
    <rect width="100%" height="100%" fill="url(#grid)" />
  </svg>
);

const ViewCube = () => (
  <svg width="60" height="62" viewBox="0 0 60 62" fontSize="9" fill="#a0a5ac" textAnchor="middle">
    <circle cx="30" cy="31" r="24" fill="none" stroke="#4e555f" strokeWidth="5" />
    <path d="M19 20h23v23H19z" fill="#b4b8bc" stroke="#cdd0d3" />
    <text x="30" y="9">北</text>
    <text x="30" y="60">南</text>
    <text x="5" y="34">西</text>
    <text x="55" y="34">东</text>
    <text x="30" y="35" fill="#6a7079">上</text>
  </svg>
);

const DrawingArea = () => (
  <Center>
    <Canvas>
      <Overlay $top="0" $right="0" $bottom="0" $left="0"><GridLines /></Overlay>
      <Overlay $right="0" $bottom="0" $left="0">
        <svg width="100%" height="64" aria-hidden="true">
          <rect x="14" y="57" width="100%" height="1" fill="#74282e" />
          <path d="M9.500 14v40M10 54.500h39M5.500 50.500h8v8h-8z" stroke="#cfd2d6" fill="none" />
          <path d="M10 1l5 5 5-5M15 6v7M52 43l10 10M62 43L52 53" stroke="#aeb3b9" fill="none" />
        </svg>
      </Overlay>
      <Overlay $top="5px" $left="3px">[−][俯视][二维线框]</Overlay>
      <Overlay $top="4px" $right="6px" $gap={2}>
        <BarButton aria-label="最小化视口"><Icon size={9}><path d="M1 11h14" stroke="#fff" strokeWidth="3" /></Icon></BarButton>
        <BarButton aria-label="还原视口"><Icon size={9}><path d="M1 5h10v10H1zM5 5V1h10v10h-4" stroke="#fff" strokeWidth="2" /></Icon></BarButton>
        <BarButton aria-label="关闭视口"><Icon size={8}><path d="M1 1l14 14M15 1L1 15" stroke="#fff" strokeWidth="3" /></Icon></BarButton>
      </Overlay>
      <Overlay $top="24px" $right="7px"><ViewCube /></Overlay>
      <Overlay $top="94px" $right="19px">
        <WcsButton>WCS<Icon size={5} width={8} box="0 0 8 5"><path d="M1 1h6v3H1z" stroke="#a9aeb5" strokeDasharray="1 1" /></Icon></WcsButton>
      </Overlay>
      <Overlay $right="83px" $bottom="0">
        <svg width="77" height="56" aria-hidden="true">
          <path d="M0 38.500h35M42 38.500h35M38.500 0v35M38.500 42v14M35.500 35.500h6v6h-6z" stroke="#dfe2e6" fill="none" />
        </svg>
      </Overlay>
    </Canvas>
    <CommandPanel>
      <CommandTools>
        <Icon size={5} width={14} box="0 0 14 5"><path d="M0 1h14M0 4h14" stroke="#c3c8cf" strokeWidth="1.500" strokeDasharray="1.500 1" /></Icon>
        <Icon size={8}><path d="M1 1l14 14M15 1L1 15" stroke="#dfe2e6" strokeWidth="3" /></Icon>
        <Icon size={12}><path d="M3 15l6-8c-1-3 1-6 4-6l-2 3 2 2 2-2c1 3-2 6-4 5l-5 7z" fill="#dfe2e6" /></Icon>
      </CommandTools>
      <CommandLog>
        <CommandLine>命令: <CommandText>_PlantPipeAdd</CommandText></CommandLine>
        <CommandLine>命令: 操作被取消: 无法在非项目图形中放置元件。</CommandLine>
        <CommandLine>窗口<CommandText>(W)</CommandText> 套索  按空格键以循环选项</CommandLine>
      </CommandLog>
    </CommandPanel>
  </Center>
);

const ToolPalette = () => (
  <RightDock>
    <EmptyCell />
    <PaletteTitle><Grip />工具选项板 - 所有选项板</PaletteTitle>
    <SideTabs $width={18}>
      {paletteTabs.map((tab, i) => (
        <SideTab key={tab} $height={42} $active={i === 0}><SideText>{tab}</SideText></SideTab>
      ))}
      <SideTab $height={10} aria-label="更多选项板" />
    </SideTabs>
    <ToolList>
      {tools.map(([kind, name]) => (
        <li key={kind}><ToolButton><ToolIcon kind={kind} />{name}</ToolButton></li>
      ))}
    </ToolList>
  </RightDock>
);

const App = () => {
  const [active, setActive] = useState('常用');

  return (
    <Shell>
      <GlobalStyle />
      <Header />
      <TabRow>
        {tabs.map((tab) => (
          <TabButton key={tab} $active={tab === active} onClick={() => setActive(tab)}>{tab}</TabButton>
        ))}
        <BarButton aria-label="最小化功能区">
          <Icon size={8} width={13} box="0 0 13 8"><path d="M0 0h13v8H0z" fill="#eceef0" /><path d="M4 5h5L6.500 3z" fill="#222933" /></Icon>
          <Caret size={5} />
        </BarButton>
      </TabRow>
      <Ribbon />
      <DocRow>
        <Icon size={12} box="0 0 12 12"><path d="M0 1.500h12M0 6h12M0 10.500h12" stroke="#eceef0" strokeWidth="1.500" /></Icon>
        <Slash />
        <DocButton $width={23}>开始</DocButton>
        <ActiveDoc>
          Drawing1
          <DocButton aria-label="关闭图形" $width={14}><Icon size={7}><path d="M1 1l14 14M15 1L1 15" stroke="#a5abb5" strokeWidth="2" /></Icon></DocButton>
        </ActiveDoc>
        <DocButton aria-label="新图形" $width={24}><Icon size={11}><path d="M8 0v16M0 8h16" stroke="#eceef0" strokeWidth="2" /></Icon></DocButton>
        <Slash />
      </DocRow>
      <Workspace>
        <ProjectManager />
        <DrawingArea />
        <ToolPalette />
      </Workspace>
    </Shell>
  );
};

export default App;
